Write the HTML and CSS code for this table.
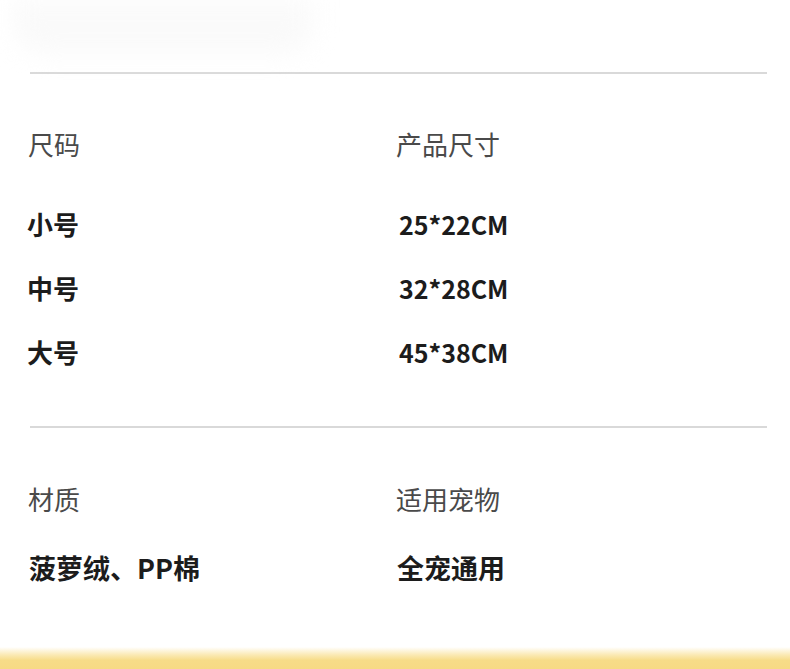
FILE: index.html
```html
<!DOCTYPE html>
<html lang="zh-CN">
<head>
<meta charset="utf-8">
<title>产品参数</title>
<link rel="stylesheet" href="styles.css">
</head>
<body>
<div class="page">
  <div class="top">
    <div class="blob"></div>
  </div>
  <div class="rule"></div>
  <section class="spec spec-size">
    <div class="head">尺码</div>
    <div class="head">产品尺寸</div>
    <div class="val">小号</div>
    <div class="val num">25*22CM</div>
    <div class="val">中号</div>
    <div class="val num">32*28CM</div>
    <div class="val">大号</div>
    <div class="val num">45*38CM</div>
  </section>
  <div class="rule"></div>
  <section class="spec spec-mat">
    <div class="head">材质</div>
    <div class="head">适用宠物</div>
    <div class="val wide">菠萝绒、PP棉</div>
    <div class="val wide">全宠通用</div>
  </section>
  <div class="fill"></div>
  <div class="band"></div>
</div>
</body>
</html>
```
FILE: styles.css
```css
html, body {
  margin: 0;
  padding: 0;
  background: #ffffff;
}
.page {
  width: 790px;
  height: 669px;
  display: flex;
  flex-direction: column;
  overflow: hidden;
  font-family: "Noto Sans CJK SC", "Noto Sans", sans-serif;
}
.top {
  height: 72px;
  padding: 0 0 0 14px;
  box-sizing: border-box;
  flex: none;
}
.blob {
  width: 300px;
  height: 54px;
  background: #fafafa;
  border-radius: 0 0 30px 30px;
  filter: blur(12px);
}
.rule {
  height: 2px;
  margin: 0 23px 0 30px;
  background: #d9d9d9;
  flex: none;
}
.spec {
  display: grid;
  grid-template-columns: 368px 1fr;
  padding-left: 28px;
  flex: none;
}
.spec-size {
  padding-top: 54px;
  padding-bottom: 42px;
}
.spec-mat {
  padding-top: 55px;
}
.head {
  font-size: 26px;
  line-height: 32px;
  color: #4a4a4a;
  font-weight: 400;
  margin-bottom: 32px;
}
.spec-mat .head {
  margin-bottom: 21px;
}
.val {
  font-size: 26px;
  line-height: 64px;
  height: 64px;
  font-weight: 700;
  color: #1c1c1c;
  margin-left: -1px;
}
.val.wide {
  font-size: 27px;
  margin-left: 1px;
}
.num {
  font-size: 25px;
  padding-left: 4px;
}
.fill {
  flex: 1;
}
.band {
  height: 22px;
  flex: none;
  background: linear-gradient(to bottom, #ffffff 0%, #fbeab6 35%, #f7dc88 60%, #f7da84 100%);
}
```
